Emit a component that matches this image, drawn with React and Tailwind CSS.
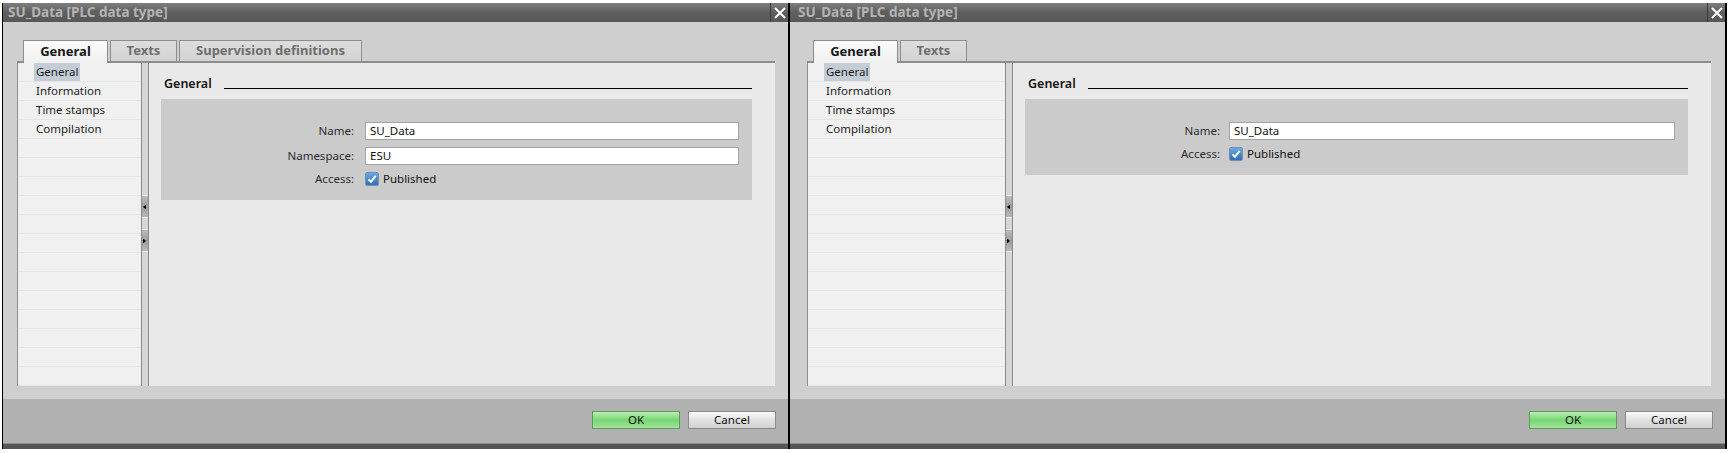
import React from "react";

function Check() {
  return (
    <div className="w-[14px] h-[14px] rounded-[2px] border border-[#7a8fa8] bg-gradient-to-b from-[#6aa8e6] to-[#2f6fb8] flex items-center justify-center">
      <svg width="10" height="10" viewBox="0 0 10 10">
        <path d="M1.5 5.2 L4 7.8 L8.6 1.8" stroke="#ffffff" strokeWidth="2" fill="none" />
      </svg>
    </div>
  );
}

function CloseX() {
  return (
    <div className="w-[18px] h-full border-l border-[#3a3a3a] flex items-center justify-center">
      <svg width="12" height="12" viewBox="0 0 12 12">
        <path d="M1 1 L11 11 M11 1 L1 11" stroke="#ffffff" strokeWidth="2" />
      </svg>
    </div>
  );
}

function Splitter() {
  return (
    <div className="w-[8px] border-l border-r border-[#8a8a8a] bg-[#d6d6d6] flex flex-col">
      <div className="mt-[132px] h-[23px] border-t border-b border-[#e8e8e8] bg-gradient-to-b from-[#bdbdbd] via-[#9d9d9d] to-[#b8b8b8] flex items-center">
        <svg width="6" height="6" viewBox="0 0 6 6">
          <path d="M1 3 L4 0.5 L4 5.5 Z" fill="#000" />
        </svg>
      </div>
      <div className="mt-[11px] h-[23px] border-t border-b border-[#e8e8e8] bg-gradient-to-b from-[#bdbdbd] via-[#9d9d9d] to-[#b8b8b8] flex items-center">
        <svg width="6" height="6" viewBox="0 0 6 6">
          <path d="M1 0.5 L4 3 L1 5.5 Z" fill="#000" />
        </svg>
      </div>
    </div>
  );
}

function Nav({ widthClass }) {
  const items = ["General", "Information", "Time stamps", "Compilation"];
  const rows = [];
  for (let i = 0; i < 17; i++) rows.push(items[i] || "");
  return (
    <div className={`${widthClass} bg-[#f0f0f0] flex flex-col overflow-hidden`}>
      {rows.map((t, i) => (
        <div key={i} className="h-[19px] shrink-0 border-b border-[#e5e5e5] flex items-center pl-[16px]">
          {t && (
            <span
              className={
                i === 0
                  ? "bg-[#c4cdd6] px-[2px] h-[18px] leading-[18px] text-[11.5px] text-[#1c1c24]"
                  : "px-[2px] text-[11.5px] leading-[18px] text-[#1c1c24]"
              }
            >
              {t}
            </span>
          )}
        </div>
      ))}
    </div>
  );
}

function Dialog({ outerClass, titlePad, bodyPad, navWidth, tabs, fields, labelClass, gapClass }) {
  return (
    <div className={`${outerClass} h-[446px] border-black flex flex-col`}>
      <div className="h-[19px] shrink-0 bg-gradient-to-b from-[#7e7e7e] via-[#5f5f5f] to-[#575757] flex items-center">
        <div className={`flex-1 ${titlePad} text-[13.5px] font-bold text-[#b4b4b4] leading-[19px] whitespace-nowrap`}>
          SU_Data [PLC data type]
        </div>
        <CloseX />
      </div>
      <div className={`flex-1 bg-[#cfcfcf] pt-[18px] pb-[13px] ${bodyPad} flex flex-col`}>
        <div className="h-[21px] flex items-end gap-[2px] pl-[6px]">
          {tabs.map((t, i) =>
            i === 0 ? (
              <div
                key={t.label}
                className={`${t.w} h-[23px] -mb-[2px] relative z-10 border border-b-0 border-[#8d8d8d] bg-gradient-to-b from-[#fbfbfb] to-[#efefef] flex items-center justify-center text-[13px] font-bold text-[#161616]`}
              >
                {t.label}
              </div>
            ) : (
              <div
                key={t.label}
                className={`${t.w} h-[21px] border border-b-0 border-[#8d8d8d] bg-gradient-to-b from-[#dedede] to-[#d2d2d2] flex items-center justify-center text-[13px] font-bold text-[#6e6e6e]`}
              >
                {t.label}
              </div>
            )
          )}
        </div>
        <div className="flex-1 border-t-2 border-l border-[#8d8d8d] flex overflow-hidden">
          <Nav widthClass={navWidth} />
          <Splitter />
          <div className="flex-1 bg-[#e9e9e9] pl-[12px] pr-[23px]">
            <div className="mt-[13px] h-[16px] flex items-end">
              <span className="pl-[3px] text-[12.5px] font-semibold leading-[16px] text-[#141414]">General</span>
              <div className="flex-1 ml-[12px] mb-[3px] border-b border-black" />
            </div>
            <div className="mt-[7px] bg-[#cbcbcb] pt-[23px] pb-[14px] pr-[13px] flex flex-col gap-[7px]">
              {fields.map((f) => (
                <div key={f.label} className="h-[18px] flex items-center">
                  <div className={`${labelClass} text-right text-[11.5px] text-[#2c2c2c]`}>{f.label}</div>
                  <div
                    className={`${gapClass} flex-1 h-[18px] border border-[#a3a3a3] bg-white pl-[4px] flex items-center text-[11.5px] text-[#111]`}
                  >
                    {f.value}
                  </div>
                </div>
              ))}
              <div className="h-[14px] flex items-center">
                <div className={`${labelClass} text-right text-[11.5px] text-[#2c2c2c]`}>Access:</div>
                <div className={`${gapClass} flex items-center`}>
                  <Check />
                  <span className="ml-[4px] text-[11.5px] text-[#111]">Published</span>
                </div>
              </div>
            </div>
          </div>
        </div>
      </div>
      <div className="h-[44px] shrink-0 bg-[#b1b1b1] flex justify-end items-start pt-[12px] pr-[12px] gap-[8px]">
        <div className="w-[88px] h-[18px] border border-[#5e9a5e] bg-gradient-to-b from-[#b8efb0] via-[#78d672] to-[#9fe598] flex items-center justify-center text-[11.5px] text-[#111]">
          OK
        </div>
        <div className="w-[88px] h-[18px] border border-[#8a8a8a] bg-gradient-to-b from-[#fafafa] via-[#e2e2e2] to-[#d0d0d0] flex items-center justify-center text-[11.5px] text-[#111]">
          Cancel
        </div>
      </div>
      <div className="h-[6px] shrink-0 border-t border-[#8e8e8e] bg-[#555555]" />
    </div>
  );
}

export default function App() {
  return (
    <div className="w-[1728px] h-[453px] bg-white overflow-hidden flex pt-[3px] pl-[2px] font-['Noto_Sans',sans-serif]">
      <Dialog
        outerClass="w-[788px] border-l border-r-2"
        titlePad="pl-[5px]"
        bodyPad="pl-[14px] pr-[13px]"
        navWidth="w-[123px]"
        tabs={[
          { label: "General", w: "w-[85px]" },
          { label: "Texts", w: "w-[67px]" },
          { label: "Supervision definitions", w: "w-[183px]" },
        ]}
        fields={[
          { label: "Name:", value: "SU_Data" },
          { label: "Namespace:", value: "ESU" },
        ]}
        labelClass="w-[193px]"
        gapClass="ml-[11px]"
      />
      <Dialog
        outerClass="w-[937px] border-r-2"
        titlePad="pl-[8px]"
        bodyPad="pl-[17px] pr-[14px]"
        navWidth="w-[197px]"
        tabs={[
          { label: "General", w: "w-[85px]" },
          { label: "Texts", w: "w-[67px]" },
        ]}
        fields={[{ label: "Name:", value: "SU_Data" }]}
        labelClass="w-[195px]"
        gapClass="ml-[9px]"
      />
    </div>
  );
}
